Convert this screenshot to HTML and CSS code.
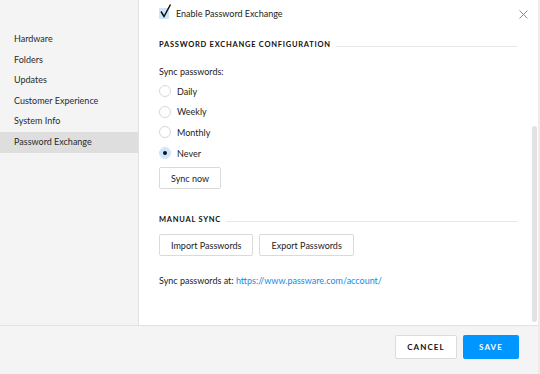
FILE: index.html
```html
<!DOCTYPE html>
<html lang="en">
<head>
  <meta charset="UTF-8" />
  <title>Settings - Password Exchange</title>
  <link rel="stylesheet" href="styles.css">
</head>
<body>
  <div class="dialog">
    <div class="dialog-body">
      <nav class="sidebar">
        <div class="nav-item">Hardware</div>
        <div class="nav-item">Folders</div>
        <div class="nav-item">Updates</div>
        <div class="nav-item">Customer Experience</div>
        <div class="nav-item">System Info</div>
        <div class="nav-item active">Password Exchange</div>
      </nav>

      <main class="content">
        <button class="close-btn" aria-label="Close">
          <svg width="9" height="9" viewBox="0 0 9 9"><path d="M0.5 0.5L8.5 8.5M8.5 0.5L0.5 8.5" stroke="#8a8a8a" stroke-width="1" fill="none"/></svg>
        </button>

        <label class="check-row">
          <span class="checkbox">
            <svg width="14" height="15" viewBox="0 0 14 15"><path d="M2 7.5L5 12.5L11.5 0.5" stroke="#111" stroke-width="1.5" fill="none"/></svg>
          </span>
          Enable Password Exchange
        </label>

        <div class="section-title first"><span>Password Exchange Configuration</span></div>

        <div class="label">Sync passwords:</div>
        <div class="radio-list">
          <label class="radio-row"><span class="radio"></span>Daily</label>
          <label class="radio-row"><span class="radio"></span>Weekly</label>
          <label class="radio-row"><span class="radio"></span>Monthly</label>
          <label class="radio-row"><span class="radio checked"></span>Never</label>
        </div>
        <button class="btn">Sync now</button>

        <div class="section-title"><span>Manual Sync</span></div>
        <div class="btn-row">
          <button class="btn">Import Passwords</button>
          <button class="btn">Export Passwords</button>
        </div>

        <div class="sync-at">Sync passwords at: <a href="#">https://www.passware.com/account/</a></div>

        <div class="scrollbar"><div class="thumb"></div></div>
      </main>
    </div>

    <footer class="dialog-footer">
      <button class="btn-cancel">Cancel</button>
      <button class="btn-save">Save</button>
    </footer>
  </div>
</body>
</html>
```

FILE: styles.css
```css
body {
  margin: 0;
  padding: 0;
  font-family: "Lato", "Noto Sans", sans-serif;
  font-size: 9px;
  color: #222;
  background: #fff;
}

.dialog {
  width: 540px;
  height: 374px;
  display: flex;
  flex-direction: column;
  border-right: 2px solid #ececec;
  box-sizing: border-box;
}

.dialog-body {
  display: flex;
  height: 325px;
}

.sidebar {
  width: 138px;
  background: #f4f4f4;
  border-right: 1px solid #e3e3e3;
  padding-top: 29px;
}

.nav-item {
  height: 20.6px;
  line-height: 20.6px;
  padding-left: 14px;
  color: #2a2a2a;
}

.nav-item.active {
  background: #dedede;
}

.content {
  flex: 1;
  position: relative;
  padding: 0 21px 0 20px;
}

.close-btn {
  position: absolute;
  top: 9px;
  right: 9px;
  border: none;
  background: none;
  padding: 0;
  width: 11px;
  height: 11px;
  display: flex;
  align-items: center;
  justify-content: center;
}

.check-row {
  display: flex;
  align-items: center;
  gap: 7px;
  height: 26px;
}

.checkbox {
  width: 10px;
  height: 11px;
  background: #cde6fb;
  position: relative;
  margin-top: 1px;
}

.checkbox svg {
  position: absolute;
  left: 0;
  top: -4px;
}

.section-title {
  display: flex;
  align-items: center;
  gap: 5px;
  font-size: 7.5px;
  font-weight: bold;
  letter-spacing: 0.75px;
  text-transform: uppercase;
  color: #111;
  margin-top: 22px;
  height: 16px;
}

.section-title::after {
  content: "";
  flex: 1;
  height: 1px;
  background: #e6e6e6;
  margin-top: 4px;
}

.section-title.first {
  margin-top: 10px;
}

.label {
  margin-top: 11px;
  height: 18px;
  line-height: 18px;
}

.radio-list {
  display: flex;
  flex-direction: column;
}

.radio-row {
  display: flex;
  align-items: center;
  gap: 6px;
  height: 20.6px;
}

.radio {
  width: 12px;
  height: 12px;
  border: 1px solid #d8d8d8;
  border-radius: 50%;
  box-sizing: border-box;
  background: #fff;
  display: flex;
  align-items: center;
  justify-content: center;
}

.radio.checked {
  background: #cde6fb;
  border-color: #cde6fb;
}

.radio.checked::after {
  content: "";
  width: 4px;
  height: 4px;
  border-radius: 50%;
  background: #111;
}

.btn {
  font-family: inherit;
  font-size: 9px;
  color: #222;
  background: #fff;
  border: 1px solid #dadada;
  border-radius: 2px;
  height: 22px;
  padding: 0 11px;
  cursor: pointer;
}

.radio-list + .btn {
  margin-top: 4px;
}

.btn-row {
  display: flex;
  gap: 6px;
  margin-top: 7px;
}

.sync-at {
  margin-top: 19px;
}

.sync-at a {
  color: #1a8ae5;
  text-decoration: none;
}

.scrollbar {
  position: absolute;
  right: 1px;
  top: 0;
  bottom: 0;
  width: 5px;
}

.thumb {
  position: absolute;
  top: 126px;
  bottom: 3px;
  width: 5px;
  border-radius: 3px;
  background: #e2e2e2;
}

.dialog-footer {
  height: 49px;
  background: #f4f4f4;
  border-top: 1px solid #e2e2e2;
  display: flex;
  align-items: flex-start;
  justify-content: flex-end;
  gap: 6px;
  padding: 9px 19px 0 0;
  box-sizing: border-box;
}

.btn-cancel,
.btn-save {
  font-family: inherit;
  font-size: 8px;
  font-weight: bold;
  letter-spacing: 1.1px;
  text-transform: uppercase;
  height: 24px;
  border-radius: 2px;
  cursor: pointer;
}

.btn-cancel {
  width: 62px;
  background: #fff;
  border: 1px solid #dcdcdc;
  color: #111;
}

.btn-save {
  width: 56px;
  background: #0096ff;
  border: none;
  color: #fff;
}
```
